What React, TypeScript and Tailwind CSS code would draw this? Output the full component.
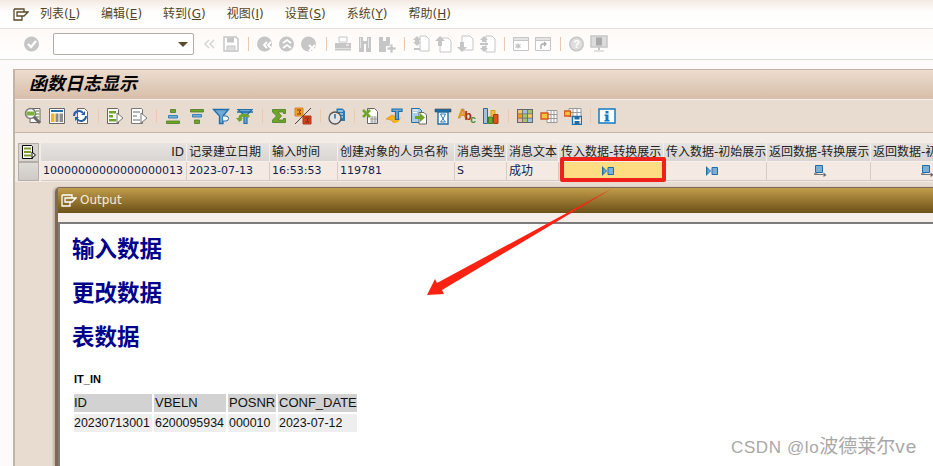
const UI_FONT = "font-['DejaVu_Sans','Noto_Sans_CJK_SC',sans-serif]";

const GREEN = "#6fa52c";
const DKGREEN = "#4d7c1d";
const BLUE = "#1f6ea8";
const GRAY = "#c6c6c6";

function Ico({ children, size = 18 }: { children: React.ReactNode; size?: number }) {
  return (
    <svg width={size} height={size} viewBox="0 0 18 18" fill="none">
      {children}
    </svg>
  );
}

/* ---------- standard toolbar (disabled, all grey) ---------- */
const Round = ({ children }: { children?: React.ReactNode }) => (
  <Ico>
    <circle cx="8.5" cy="9" r="7.5" fill={GRAY} />
    {children}
  </Ico>
);

const stdIcons: Record<string, React.ReactNode> = {
  check: (
    <Round>
      <path d="M5 9l3 3 5-6" stroke="#fff" strokeWidth="2.4" />
    </Round>
  ),
  prev: (
    <Ico>
      <path d="M9 5L5 9l4 4M14 5l-4 4 4 4" stroke="#d6d6d6" strokeWidth="1.6" />
    </Ico>
  ),
  save: (
    <Ico>
      <path d="M2 2h12l2 2v12H2z" fill="#fff" stroke={GRAY} strokeWidth="1.5" />
      <path d="M5 2.5h7v5H5z" fill={GRAY} />
      <path d="M5 11h8v5H5z" fill="#ddd" stroke={GRAY} />
    </Ico>
  ),
  back: (
    <Round>
      <path d="M11 7l-3 3 3 3M15 7l-3 3 3 3" stroke="#fff" strokeWidth="1.8" />
    </Round>
  ),
  up: (
    <Round>
      <path d="M5 8l4-3 4 3M5 13l4-3 4 3" stroke="#fff" strokeWidth="1.8" />
    </Round>
  ),
  cancel: (
    <Round>
      <path d="M9 10l6 6M15 10l-6 6" stroke="#fff" strokeWidth="2" />
    </Round>
  ),
  print: (
    <Ico>
      <path d="M5 2h8v5H5z" fill="#fff" stroke={GRAY} />
      <path d="M1 8h16v5H1z" fill={GRAY} />
      <path d="M1 14.500h16" stroke={GRAY} strokeWidth="2" />
      <path d="M12 10h3" stroke="#fff" />
    </Ico>
  ),
  find: (
    <Ico>
      <path d="M3 2h4v4h4V2h4v15h-5V9H8v8H3z" fill={GRAY} />
      <path d="M4 3h1v10H4zM12 3h1v10h-1z" fill="#e6e6e6" />
    </Ico>
  ),
  findNext: (
    <Ico>
      <path d="M1 2h4v4h3V2h4v9H8v6H1z" fill={GRAY} />
      <path d="M12 9h3v3h3v3h-3v3h-3v-3H9v-3h3z" fill={GRAY} stroke="#fff" strokeWidth="0.7" />
    </Ico>
  ),
  first: (
    <Ico>
      <path d="M8 1h6l3 3v12H8z" fill="#fff" stroke={GRAY} />
      <path d="M5 1l4 4H7v2l2 0-4 4-4-4h2V5H1z" fill={GRAY} />
      <path d="M2 13h6v2H2z" fill={GRAY} />
    </Ico>
  ),
  pageUp: (
    <Ico>
      <path d="M6 3h8l3 3v11H6z" fill="#fff" stroke={GRAY} />
      <path d="M6 1l5 5H8v5H4V6H1z" fill={GRAY} />
    </Ico>
  ),
  pageDown: (
    <Ico>
      <path d="M6 1h8l3 3v11H6z" fill="#fff" stroke={GRAY} />
      <path d="M6 17l5-5H8V7H4v5H1z" fill={GRAY} />
    </Ico>
  ),
  last: (
    <Ico>
      <path d="M8 1h6l3 3v13H8z" fill="#fff" stroke={GRAY} />
      <path d="M6 1l4 4H2zM6 17l4-4H2zM4 5h4v2H4zM4 11h4v2H4z" fill={GRAY} />
      <path d="M2 8h8v2H2z" fill={GRAY} />
    </Ico>
  ),
  newWin: (
    <Ico>
      <path d="M1.500 2.500h15v13h-15z" fill="#fff" stroke={GRAY} />
      <path d="M1.500 2.500h15v3h-15z" fill="#e4e4e4" stroke={GRAY} />
      <path d="M6 8l1 1.500L9 9l-1 2 1 2-2-.5L6 14l-1-1.500L3 13l1-2-1-2 2 .5z" fill={GRAY} />
    </Ico>
  ),
  shortcut: (
    <Ico>
      <path d="M1.500 2.500h15v13h-15z" fill="#fff" stroke={GRAY} />
      <path d="M1.500 2.500h15v3h-15z" fill="#e4e4e4" stroke={GRAY} />
      <path d="M7 14v-3c0-1 1-2 2-2h2M10 7l2 2-2 2" stroke="#aaa" strokeWidth="1.300" />
    </Ico>
  ),
  help: (
    <Round>
      <circle cx="8.500" cy="9" r="6" fill="#ddd" />
      <text x="8.500" y="13" textAnchor="middle" fontSize="11" fontWeight="700" fill="#fff" fontFamily="Liberation Sans">
        ?
      </text>
    </Round>
  ),
  monitor: (
    <Ico>
      <path d="M1 1h16v11H1z" fill="#dcdcdc" stroke={GRAY} strokeWidth="1.500" />
      <path d="M6 2.500h6v8H6z" fill="#a9a9a9" />
      <path d="M8 12h2v3H8zM4 15.500h10v1H4z" fill={GRAY} />
    </Ico>
  ),
};

/* ---------- application toolbar ---------- */
const Doc = () => <path d="M5.500 1.500h7l3 3v12h-10z" fill="#fff" stroke="#666" />;

const appIcons: Record<string, React.ReactNode> = {
  detail: (
    <Ico>
      <path d="M6 1.500h10v14H6z" fill="#fff" stroke="#666" />
      <path d="M12 4h3M12 7h3M12 10h3" stroke={DKGREEN} />
      <circle cx="6.500" cy="6.500" r="5" fill="#fff" stroke="#7a7a7a" strokeWidth="1.500" />
      <path d="M2.500 4.500h8v4h-8z" fill="#7bb13a" />
      <path d="M10 10l6 6" stroke="#666" strokeWidth="3" />
    </Ico>
  ),
  columns: (
    <Ico>
      <path d="M1.500 1.500h15v15h-15z" fill="#fff" stroke="#666" />
      <path d="M3 3h12v2H3z" fill={BLUE} />
      <path d="M3 6.500h3.500V15H3z" fill="#f3b51b" />
      <path d="M7.500 6.500h3V15h-3zM11.500 6.500H15V15h-3.500z" fill="#8c8c8c" />
    </Ico>
  ),
  refresh: (
    <Ico>
      <Doc />
      <path d="M2 9a5 5 0 0 1 9-3M14 9a5 5 0 0 1-9 3" stroke="#2a5fa8" strokeWidth="2" />
      <path d="M9 8l4 0 0-4zM7 10l-4 0 0 4z" fill="#2a5fa8" />
    </Ico>
  ),
  layoutGreen: (
    <Ico>
      <path d="M1.500 1.500h10l1 1v14h-11z" fill="#fff" stroke="#666" />
      <path d="M3 4h7v2.500H3zM3 8h4v2.500H3zM3 12h7v2.500H3z" fill={GREEN} />
      <path d="M11 6l6 5-6 5z" fill="#fff" stroke="#777" />
    </Ico>
  ),
  layoutGray: (
    <Ico>
      <path d="M1.500 1.500h10l1 1v14h-11z" fill="#fff" stroke="#777" />
      <path d="M3 4h7v2H3zM3 8h4v2H3zM3 12h7v2H3z" fill="#b5b5b5" />
      <path d="M11 6l6 5-6 5z" fill="#fff" stroke="#777" />
    </Ico>
  ),
  sortAsc: (
    <Ico>
      <path d="M6.500 2.500h5v3h-5zM2.500 14h13v2.500h-13z" fill={GREEN} stroke={DKGREEN} strokeWidth="0.800" />
      <path d="M4.500 8.500h9v2.500h-9z" fill="#7ab0d8" stroke={BLUE} strokeWidth="0.800" />
    </Ico>
  ),
  sortDesc: (
    <Ico>
      <path d="M2.500 2.500h13v2.500h-13zM6.500 13h5v3.500h-5z" fill={GREEN} stroke={DKGREEN} strokeWidth="0.800" />
      <path d="M4.500 7.500h9v2.500h-9z" fill="#7ab0d8" stroke={BLUE} strokeWidth="0.800" />
    </Ico>
  ),
  filter: (
    <Ico>
      <path d="M1.500 2.500h15l-5.500 6.500v7.500H7.500V9z" fill="#6fa9d6" stroke={BLUE} strokeWidth="1.300" />
      <path d="M11 9h3a2 2 0 0 1 0 5h-3" stroke={BLUE} fill="#fff" />
    </Ico>
  ),
  unfilter: (
    <Ico>
      <path d="M2 2.500h14l-5 5.500v8.500H8V8z" fill="#6fa9d6" stroke={BLUE} strokeWidth="1.200" />
      <path d="M1 5h16" stroke={BLUE} strokeWidth="1.500" />
      <path d="M4 14V11c0-3 6-4 9-1" stroke={GREEN} strokeWidth="3" />
      <path d="M0 11h7l-3.500 4z" fill={GREEN} />
    </Ico>
  ),
  sigma: (
    <Ico>
      <path d="M2.500 2.500h13v4h-2V5H8l3.500 4L8 13h5.500v-1.500h2v4h-13v-2.500L6.500 9 2.500 5z" fill={GREEN} stroke={DKGREEN} strokeWidth="0.800" />
    </Ico>
  ),
  subtotal: (
    <Ico>
      <path d="M1 1h8v8H1z" fill="#f2a01e" stroke="#d9822b" />
      <path d="M9 9h8v8H9z" fill="#d4421c" stroke="#b5371a" />
      <path d="M3 3h4L5 5l2 2H3M11 11h4l-2 2 2 2h-4" stroke="#7a2a10" strokeWidth="0.900" />
      <path d="M1 17L17 1" stroke="#444" />
    </Ico>
  ),
  clock: (
    <Ico>
      <path d="M8.500 1.500h6l2.500 2.500v10H8.500z" fill="#2a7ab5" />
      <path d="M10 4h5M10 7h5M10 10h5" stroke="#fff" />
      <circle cx="7" cy="11" r="6" fill="#e4e4e4" stroke="#555" strokeWidth="1.300" />
      <path d="M7 7v4.500" stroke={BLUE} strokeWidth="1.500" />
    </Ico>
  ),
  excel: (
    <Ico>
      <Doc />
      <path d="M8 9h7v7H8z" fill="#ddd" />
      <path d="M10 9v7M13 9v7M8 12h7" stroke="#888" strokeWidth="0.700" />
      <path d="M1 3l7 7M8 3l-7 7" stroke={GREEN} strokeWidth="2.600" />
    </Ico>
  ),
  word: (
    <Ico>
      <path d="M0 12l6-4 4 2-2 6-3-3z" fill="#f4b41a" stroke="#d98a10" strokeWidth="0.600" />
      <path d="M8 12c2 1 5 0 7-2-1 3-2 6-7 6z" fill="#f4b41a" />
      <path d="M6 2h10v2.500h-3.500v8h-3v-8H6z" fill="#6fa9d6" stroke={BLUE} strokeWidth="1.200" />
    </Ico>
  ),
  send: (
    <Ico>
      <path d="M1.500 1.500h8l2 2v12h-10z" fill="#a9cde8" stroke={BLUE} />
      <path d="M9 5.500h5l2.500 2.500v9H9z" fill="#fff" stroke="#666" />
      <path d="M3 3h5M3 5.500h4" stroke="#fff" />
      <path d="M5 9h5V6l5 4.500-5 4.500v-3H5z" fill={GREEN} />
    </Ico>
  ),
  form: (
    <Ico>
      <path d="M1 2h16v3H1z" fill={BLUE} stroke="#444" strokeWidth="0.600" />
      <path d="M4 5h10v12H4z" fill="#fff" stroke={BLUE} strokeWidth="1.400" />
      <path d="M6.500 7h5L9 12zM9 12l-2.500 3h5z" fill="#fff" stroke={BLUE} strokeWidth="0.900" />
    </Ico>
  ),
  abc: (
    <Ico>
      <text fontWeight="700" fontFamily="Liberation Sans" x="0" y="11" fontSize="13" fill="#f0a41c" stroke="#b8640e" strokeWidth="0.400">
        A
        <tspan dx="-3" dy="2" fontSize="12" fill="#a62e14" stroke="none">
          b
        </tspan>
        <tspan dx="-1.500" dy="3" fontSize="10" fill="#4d8a2a" stroke="none">
          c
        </tspan>
      </text>
    </Ico>
  ),
  chart: (
    <Ico>
      <path d="M1.500 1.500h4v15h-4z" fill="#9cc4e2" stroke={BLUE} />
      <path d="M6.500 10h4v6.500h-4z" fill={GREEN} stroke={DKGREEN} />
      <path d="M9 3.500h4V9H9z" fill="#f6c33c" stroke="#d99a1e" />
      <path d="M11.500 7.500h4.500v9h-4.500z" fill="#d9541e" stroke="#a33e14" />
    </Ico>
  ),
  gridColor: (
    <Ico>
      <path d="M1 2h16v14H1z" fill="#666" />
      <path d="M2 3h4.200v3.500H2z" fill="#f4c766" />
      <path d="M7 3h4.200v3.500H7z" fill="#9cc4e2" />
      <path d="M12 3h4v3.500h-4z" fill="#a4c46a" />
      <path d="M2 7.200h4.200v3.500H2z" fill="#ef9d1e" />
      <path d="M7 7.200h4.200v3.500H7z" fill="#a4c46a" />
      <path d="M12 7.200h4v3.500h-4z" fill="#f4c766" />
      <path d="M2 11.500h4.200V15H2z" fill="#e8b4b4" />
      <path d="M7 11.500h4.200V15H7z" fill="#a4c46a" />
      <path d="M12 11.500h4V15h-4z" fill="#9cc4e2" />
    </Ico>
  ),
  gridPick: (
    <Ico>
      <path d="M7 3.500h10v12H7z" fill="#fff" stroke="#999" />
      <path d="M11 3.500v12M14 3.500v12M7 7.500h10M7 11.500h10" stroke="#999" />
      <path d="M1 6h7v6H1z" fill="#f6c33c" stroke="#d9541e" strokeWidth="1.400" />
    </Ico>
  ),
  gridSave: (
    <Ico>
      <path d="M5 1.500h12v8H5z" fill="#fff" stroke="#999" />
      <path d="M9 1.500v8M13 1.500v8M5 5.500h12" stroke="#999" />
      <path d="M0.500 4h6v5h-6z" fill="#f6c33c" stroke="#d9541e" strokeWidth="1.300" />
      <path d="M8.500 9.500h9v8h-9z" fill="#fff" stroke={BLUE} strokeWidth="1.400" />
      <path d="M10.500 9.500h5v3h-5zM10.500 14h5v3.500h-5z" fill={BLUE} />
    </Ico>
  ),
  info: (
    <Ico>
      <path d="M1 2h16v14H1z" fill="#fff" stroke="#0f7cc4" strokeWidth="1.500" />
      <path d="M7.500 4h3v2.500h-3zM6.500 7.500h4V13h1v1.500h-5V13h1V9h-1z" fill="#0f7cc4" />
    </Ico>
  ),
};

const MENUS: [string, string][] = [
  ["列表", "L"],
  ["编辑", "E"],
  ["转到", "G"],
  ["视图", "I"],
  ["设置", "S"],
  ["系统", "Y"],
  ["帮助", "H"],
];

const STD_GROUPS = [
  ["prev", "save"],
  ["back", "up", "cancel"],
  ["print", "find", "findNext"],
  ["first", "pageUp", "pageDown", "last"],
  ["newWin", "shortcut"],
  ["help", "monitor"],
];

const APP_GROUPS = [
  ["detail", "columns", "refresh"],
  ["layoutGreen", "layoutGray"],
  ["sortAsc", "sortDesc", "filter", "unfilter"],
  ["sigma", "subtotal"],
  ["clock"],
  ["excel", "word", "send", "form", "abc", "chart"],
  ["gridColor", "gridPick", "gridSave"],
  ["info"],
];

function InIcon() {
  return (
    <svg width="12" height="10" viewBox="0 0 12 10" className="mx-auto -translate-x-[3px]">
      <path d="M0.500 0.500v9M1 1.500v7L4.500 5z" fill="#7ab0d8" stroke="#1f6ea8" />
      <path d="M6 1.500h5.500v7H6z" fill="#7ab0d8" stroke="#1f6ea8" />
    </svg>
  );
}

function OutIcon() {
  return (
    <svg width="13" height="12" viewBox="0 0 13 12" className="mx-auto translate-x-[2px]">
      <path d="M1.500 0.500h7v7h-7z" fill="#7ab0d8" stroke="#1f6ea8" />
      <path d="M0.500 8.500v1h9" stroke="#777" />
      <path d="M9.500 7.500l3 2.500-3 2z" fill="#666" />
    </svg>
  );
}

const COLUMNS: { title: string; value: React.ReactNode; right?: boolean }[] = [
  { title: "ID", value: "10000000000000000013", right: true },
  { title: "记录建立日期", value: "2023-07-13" },
  { title: "输入时间", value: "16:53:53" },
  { title: "创建对象的人员名称", value: "119781" },
  { title: "消息类型", value: "S" },
  { title: "消息文本", value: <span className="text-[12px]">成功</span> },
  { title: "传入数据-转换展示", value: <InIcon /> },
  { title: "传入数据-初始展示", value: <InIcon /> },
  { title: "返回数据-转换展示", value: <OutIcon /> },
  { title: "返回数据-初始展示", value: <OutIcon /> },
];

const COL_WIDTHS = [
  "w-[146px] shrink-0",
  "w-[83px] shrink-0",
  "w-[68px] shrink-0",
  "w-[117px] shrink-0",
  "w-[52px] shrink-0",
  "w-[52px] shrink-0",
  "w-[105px] shrink-0",
  "w-[103px] shrink-0",
  "w-[104px] shrink-0",
  "w-[110px] shrink-0",
];

function PageIcon({ color }: { color: string }) {
  return (
    <svg width="16" height="13" viewBox="0 0 16 13" fill="none" stroke={color} strokeWidth="1.300">
      <path d="M1 1h10v3M1 1v11h8l0-4h2M4 8h7l4-4H4z" />
    </svg>
  );
}

function Sep({ w }: { w: string }) {
  return (
    <div className={`flex h-[18px] items-center justify-center ${w}`}>
      <div className="h-[14px] w-px bg-[#ecc9ad]" />
    </div>
  );
}

export default function App() {
  return (
    <div className={`relative flex h-[466px] w-[933px] flex-col overflow-hidden bg-white ${UI_FONT}`}>
      {/* menu */}
      <div className="flex h-[29px] shrink-0 items-center gap-[21px] border-b border-[#e6e0da] bg-gradient-to-b from-[#f3e9e2] via-[#fefdfc] via-40% to-white pl-[13px]">
        <div className="mr-[-10px]">
          <PageIcon color="#5a4a2a" />
        </div>
        {MENUS.map(([label, key]) => (
          <span key={key} className="text-[12px] leading-none text-[#54431f]">
            {label}(<span className="underline">{key}</span>)
          </span>
        ))}
      </div>

      {/* standard toolbar */}
      <div className="flex h-[31px] shrink-0 items-center border-b border-[#dfd9d3] bg-gradient-to-b from-[#fdf9f6] to-white pl-[21px]">
        <div className="flex w-[22px] justify-center">{stdIcons.check}</div>
        <div className="ml-[10px] mr-[4px] flex h-[22px] w-[141px] items-center justify-end rounded-[2px] border border-[#b0aca8] bg-white pr-[5px]">
          <div className="h-0 w-0 border-x-[5px] border-t-[5px] border-x-transparent border-t-[#5a4a2a]" />
        </div>
        {STD_GROUPS.map((group, i) => (
          <div key={i} className="flex items-center">
            {i > 0 && <Sep w="w-[12px]" />}
            {group.map((name) => (
              <div key={name} className="flex w-[22px] justify-center">
                {stdIcons[name]}
              </div>
            ))}
          </div>
        ))}
      </div>

      <div className="flex min-h-0 flex-1 flex-col bg-[#fdfbfa] pl-[13px] pt-[9px]">
        <div className="flex min-h-0 flex-1 flex-col border-l-2 border-t border-[#c4b3a6] bg-[#e8dbd0]">
          {/* title */}
          <div className="flex h-[29px] shrink-0 items-center bg-gradient-to-b from-[#ecdccf] to-[#d7bea9] pb-[2px] pl-[14px]">
            <h1 className="text-[18px] font-bold italic text-black">函数日志显示</h1>
          </div>

          {/* application toolbar */}
          <div className="flex h-[34px] shrink-0 items-center border-b border-t border-b-[#c8b5a8] border-t-[#f8f2ee] pl-[6px]">
            {APP_GROUPS.map((group, i) => (
              <div key={i} className="flex items-center">
                {i > 0 && <Sep w="w-[10px]" />}
                {group.map((name) => (
                  <div key={name} className="flex w-[24px] justify-center">
                    {appIcons[name]}
                  </div>
                ))}
              </div>
            ))}
          </div>

          {/* result list */}
          <div className="shrink-0 bg-[#f3ebe5] pb-[1px] pl-[3px] pt-[10px]">
            <div className="flex">
              <div className="mr-[2px] w-[21px] shrink-0">
                <div className="flex h-[19px] items-center justify-center border border-[#b5aea8] bg-[#d8d4d0]">
                  <svg width="15" height="15" viewBox="0 0 15 15">
                    <path d="M1.500 0.500h9l1 1v12h-10z" fill="#fff" stroke="#000" />
                    <path d="M3 2.500h7v2H3zM3 6h7v2H3zM3 9.500h7v2H3z" fill="#7d9a2e" />
                    <path d="M11 7l3.500 3-3.500 3z" fill="#fff" stroke="#000" />
                  </svg>
                </div>
                <div className="h-[19px] border border-[#b5aea8] bg-gradient-to-b from-[#dedad6] to-[#cfcac6]" />
              </div>
              {COLUMNS.map((col, i) => (
                <div key={col.title} className={COL_WIDTHS[i]}>
                  <div
                    className={`flex h-[19px] items-center overflow-hidden whitespace-nowrap border-b border-r border-[#f5eee9] bg-gradient-to-b from-[#e6e3e0] to-[#d8d5d2] px-[2px] text-[12px] text-[#222] ${
                      col.right ? "justify-end" : ""
                    }`}
                  >
                    {col.title}
                  </div>
                  <div
                    className={`flex h-[19px] items-center overflow-hidden whitespace-nowrap border-b border-r border-[#d6ccc4] px-[2px] text-[11px] text-[#0f1d4f] ${
                      i === 6 ? "bg-[#fddc82]" : "bg-[#f4eae3]"
                    }`}
                  >
                    <div className={typeof col.value === "string" ? "" : "w-full"}>{col.value}</div>
                  </div>
                </div>
              ))}
            </div>
          </div>

          {/* output popup */}
          <div className="ml-[40px] mt-[5px] flex min-h-0 w-[900px] flex-1 flex-col overflow-hidden rounded-t-[5px] border-l-[3px] border-t border-[#7c6a55] shadow-[-2px_0_2px_#0000002e]">
            <div className="flex h-[25px] shrink-0 items-center gap-[3px] bg-gradient-to-b from-[#c39d4c] to-[#6c5116] pb-[1px] pl-[3px] text-[12px] text-[#f7ecd6]">
              <PageIcon color="#fff" />
              Output
            </div>
            <div className="flex min-h-0 flex-1 flex-col bg-[#f5ede7] pt-[9px]">
              <div className="flex-1 border-l-2 border-t-2 border-[#7c7c7c] bg-white pl-[12px] font-['Liberation_Sans','Noto_Sans_CJK_SC',sans-serif]">
                <div className="flex flex-col gap-[14px] pt-[11px] text-[22.500px] font-bold leading-[30px] text-[#00008b]">
                  <h2>输入数据</h2>
                  <h2>更改数据</h2>
                  <h2>表数据</h2>
                </div>
                <p className="mt-[21px] pl-[2px] text-[11px] font-bold leading-none text-black">IT_IN</p>
                <table className="mt-[7px] border-separate border-spacing-[2px] leading-[18px] text-[#111]">
                  <tbody>
                    <tr className="bg-[#d2d2d2] text-[13px]">
                      <td className="w-[78px] p-0">ID</td>
                      <td className="w-[72px] p-0 pl-px">VBELN</td>
                      <td className="w-[48px] p-0 pl-px">POSNR</td>
                      <td className="w-[79px] p-0 pl-px">CONF_DATE</td>
                    </tr>
                    <tr className="bg-[#eeeeee] text-[12.400px]">
                      <td className="p-0">20230713001</td>
                      <td className="p-0 pl-px">6200095934</td>
                      <td className="p-0 pl-px">000010</td>
                      <td className="p-0 pl-px">2023-07-12</td>
                    </tr>
                  </tbody>
                </table>
              </div>
            </div>
          </div>
        </div>
      </div>

      {/* red annotation drawn on top of the screenshot */}
      <div className="absolute left-[560px] top-[157px] h-[25px] w-[106px] rounded-[2px] border-[4px] border-[#f0201a]" />
      <svg className="absolute left-0 top-0" width="933" height="466" fill="none">
        <path d="M613 188L442 290L444 294L427 295L435 279L437 283Z" fill="#fb2214" />
      </svg>

      <span className="absolute left-[731px] top-[436px] whitespace-nowrap font-['Liberation_Sans','Noto_Sans_CJK_SC',sans-serif] text-[17px] leading-[22px] tracking-[0.6px] text-[#a8a8a8]">
        CSDN @lo
        <span className="text-[19px] tracking-normal">波德莱尔</span>
        <span className="text-[19px] tracking-[1px]">ve</span>
      </span>
    </div>
  );
}
